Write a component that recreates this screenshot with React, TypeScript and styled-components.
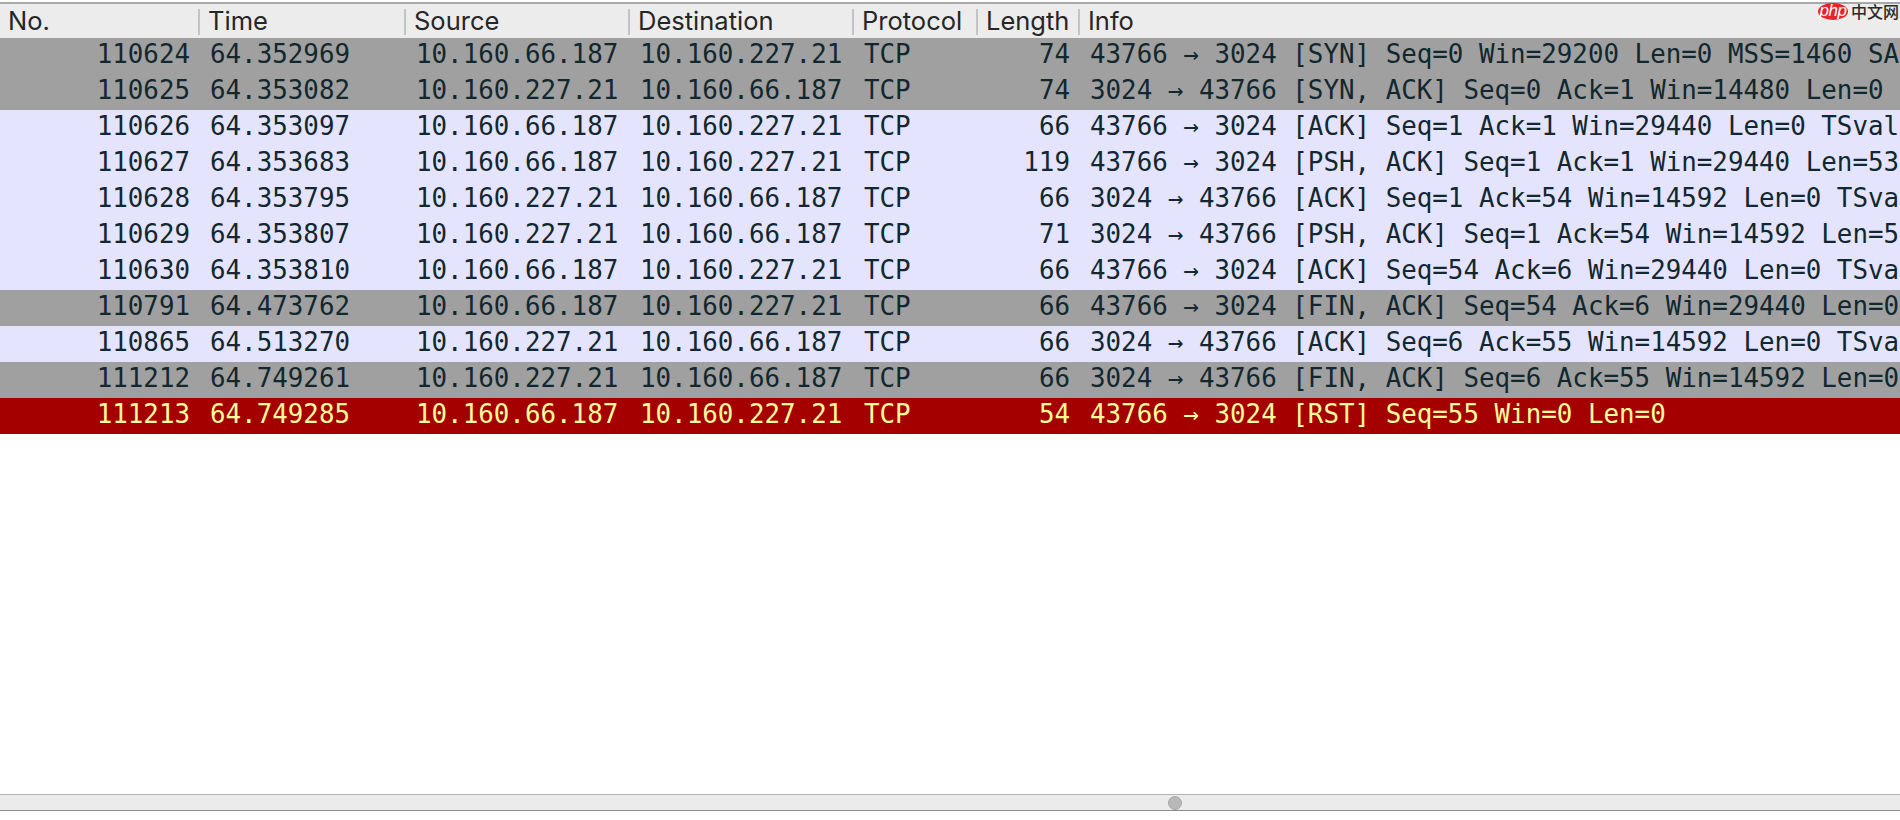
import styled, { createGlobalStyle } from "styled-components";

const GlobalStyle = createGlobalStyle`
  html, body {
    margin: 0;
    padding: 0;
    background: #ffffff;
  }
`;

type Kind = "syn" | "normal" | "rst";

const packets: [string, string, string, string, string, string, Kind][] = [
  ["110624", "64.352969", "10.160.66.187", "10.160.227.21", "74", "43766 → 3024 [SYN] Seq=0 Win=29200 Len=0 MSS=1460 SA", "syn"],
  ["110625", "64.353082", "10.160.227.21", "10.160.66.187", "74", "3024 → 43766 [SYN, ACK] Seq=0 Ack=1 Win=14480 Len=0", "syn"],
  ["110626", "64.353097", "10.160.66.187", "10.160.227.21", "66", "43766 → 3024 [ACK] Seq=1 Ack=1 Win=29440 Len=0 TSval", "normal"],
  ["110627", "64.353683", "10.160.66.187", "10.160.227.21", "119", "43766 → 3024 [PSH, ACK] Seq=1 Ack=1 Win=29440 Len=53", "normal"],
  ["110628", "64.353795", "10.160.227.21", "10.160.66.187", "66", "3024 → 43766 [ACK] Seq=1 Ack=54 Win=14592 Len=0 TSva", "normal"],
  ["110629", "64.353807", "10.160.227.21", "10.160.66.187", "71", "3024 → 43766 [PSH, ACK] Seq=1 Ack=54 Win=14592 Len=5", "normal"],
  ["110630", "64.353810", "10.160.66.187", "10.160.227.21", "66", "43766 → 3024 [ACK] Seq=54 Ack=6 Win=29440 Len=0 TSva", "normal"],
  ["110791", "64.473762", "10.160.66.187", "10.160.227.21", "66", "43766 → 3024 [FIN, ACK] Seq=54 Ack=6 Win=29440 Len=0", "syn"],
  ["110865", "64.513270", "10.160.227.21", "10.160.66.187", "66", "3024 → 43766 [ACK] Seq=6 Ack=55 Win=14592 Len=0 TSva", "normal"],
  ["111212", "64.749261", "10.160.227.21", "10.160.66.187", "66", "3024 → 43766 [FIN, ACK] Seq=6 Ack=55 Win=14592 Len=0", "syn"],
  ["111213", "64.749285", "10.160.66.187", "10.160.227.21", "54", "43766 → 3024 [RST] Seq=55 Win=0 Len=0", "rst"],
];

const columns = "200px 206px 224px 224px 124px 102px 1fr";

const rowColors = {
  syn: { bg: "#a0a0a0", fg: "#12272e" },
  normal: { bg: "#e4e4ff", fg: "#12272e" },
  rst: { bg: "#a40000", fg: "#fffc9c" },
};

const App = () => {
  return (
    <Page>
      <GlobalStyle />
      <HeaderRow>
        <HeaderCell>No.</HeaderCell>
        <HeaderCell>Time</HeaderCell>
        <HeaderCell>Source</HeaderCell>
        <HeaderCell>Destination</HeaderCell>
        <HeaderCell>Protocol</HeaderCell>
        <HeaderCell>Length</HeaderCell>
        <HeaderCell $last>Info</HeaderCell>
      </HeaderRow>
      <PacketList>
        {packets.map(([no, time, src, dst, len, info, kind]) => (
          <PacketRow key={no} $kind={kind}>
            <NumberCell>{no}</NumberCell>
            <TextCell>{time}</TextCell>
            <TextCell>{src}</TextCell>
            <TextCell>{dst}</TextCell>
            <TextCell>TCP</TextCell>
            <NumberCell>{len}</NumberCell>
            <TextCell>{info}</TextCell>
          </PacketRow>
        ))}
      </PacketList>
      <ScrollBar>
        <ScrollKnob />
      </ScrollBar>
      <Watermark>
        <WatermarkBadge>php</WatermarkBadge>
        <WatermarkText>中文网</WatermarkText>
      </Watermark>
    </Page>
  );
};

export default App;

const Page = styled.div`
  position: relative;
  display: flex;
  flex-direction: column;
  width: 1900px;
  height: 820px;
  overflow: hidden;
  background: #ffffff;
`;

const HeaderRow = styled.div`
  display: grid;
  grid-template-columns: ${columns};
  height: 36px;
  box-sizing: border-box;
  border-top: 2px solid #a8a8a8;
  background: #ececec;
  align-items: center;
  flex-shrink: 0;
  margin-top: 2px;
`;

const HeaderCell = styled.div<{ $last?: boolean }>`
  height: 26px;
  line-height: 23px;
  margin-top: 2px;
  box-sizing: border-box;
  padding-left: 8px;
  border-right: ${(p) => (p.$last ? "none" : "2px solid #c4c4c4")};
  font-family: Inter, "Liberation Sans", sans-serif;
  font-size: 25.5px;
  color: #262626;
  white-space: nowrap;
`;

const PacketList = styled.div`
  flex: 1;
  display: flex;
  flex-direction: column;
`;

const PacketRow = styled.div<{ $kind: Kind }>`
  display: grid;
  grid-template-columns: ${columns};
  height: 36px;
  flex-shrink: 0;
  line-height: 33px;
  background: ${(p) => rowColors[p.$kind].bg};
  color: ${(p) => rowColors[p.$kind].fg};
  font-family: "DejaVu Sans Mono", "Liberation Mono", monospace;
  font-size: 25.85px;
`;

const TextCell = styled.div`
  padding-left: 10px;
  white-space: nowrap;
`;

const NumberCell = styled.div`
  padding-right: 10px;
  text-align: right;
  white-space: nowrap;
`;

const ScrollBar = styled.div`
  display: flex;
  align-items: center;
  justify-content: center;
  height: 17px;
  box-sizing: border-box;
  margin-bottom: 9px;
  padding-left: 450px;
  border-top: 1px solid #b4b4b4;
  border-bottom: 1px solid #8c8c8c;
  background: #ebebeb;
  flex-shrink: 0;
`;

const ScrollKnob = styled.div`
  width: 12px;
  height: 12px;
  border-radius: 50%;
  background: #b8b8b8;
  border: 0.5px solid #a8a8a8;
`;

const Watermark = styled.div`
  position: absolute;
  top: 2px;
  right: 1px;
  display: flex;
  align-items: center;
  gap: 3px;
`;

const WatermarkBadge = styled.div`
  width: 30px;
  height: 17px;
  line-height: 15px;
  border-radius: 50%;
  background: #e8232a;
  color: #ffffff;
  font-family: "Liberation Sans", sans-serif;
  font-size: 17px;
  font-style: italic;
  letter-spacing: -0.5px;
  text-align: center;
`;

const WatermarkText = styled.div`
  font-family: "Noto Sans CJK SC", sans-serif;
  font-size: 16px;
  font-weight: 500;
  line-height: 18px;
  color: #2a2a2a;
  white-space: nowrap;
`;
